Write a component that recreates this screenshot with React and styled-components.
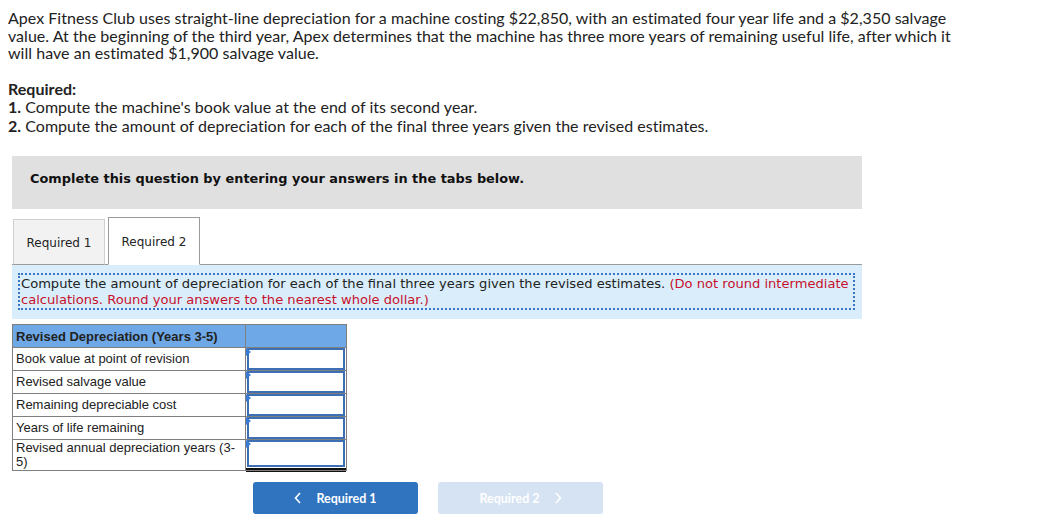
import React from "react";
import styled, { createGlobalStyle } from "styled-components";

const Global = createGlobalStyle`
  html, body { margin: 0; padding: 0; background: #fff; }
  body { font-family: Lato, "Open Sans", sans-serif; color: #222; }
`;

const Page = styled.div`
  padding: 9px 8px 8px 8px;
  width: 1040px;
  box-sizing: border-box;
`;

const Para = styled.p`
  margin: 0 0 18px 0;
  font-family: Lato, sans-serif;
  font-size: 16px;
  letter-spacing: 0.03px;
  line-height: 17.6px;
  color: #222;
  width: 950px;
`;

const ReqList = styled.div`
  font-family: Lato, sans-serif;
  font-size: 16px;
  letter-spacing: 0.03px;
  line-height: 18.5px;
  color: #222;
  margin-bottom: 21px;
`;

const Bold = styled.b`
  font-weight: 700;
`;

const Work = styled.div`
  margin-left: 4px;
  width: 850px;
`;

const Banner = styled.div`
  background: #e0e0e0;
  height: 53px;
  box-sizing: border-box;
  padding: 15px 0 0 18px;
  font-family: "DejaVu Sans", Verdana, sans-serif;
  font-weight: 700;
  font-size: 12.9px;
  line-height: 16px;
  color: #111;
`;

const Tabs = styled.div`
  display: flex;
  align-items: flex-end;
  gap: 3px;
  margin-top: 8px;
  padding-left: 1px;
  position: relative;
  z-index: 1;
  margin-bottom: -1px;
`;

const Tab = styled.div`
  width: 92px;
  height: ${(p) => (p.$active ? 48 : 46)}px;
  box-sizing: border-box;
  display: flex;
  align-items: center;
  justify-content: center;
  font-family: "DejaVu Sans", Verdana, sans-serif;
  font-size: 12px;
  color: #222;
  background: ${(p) => (p.$active ? "#fff" : "#f2f2f2")};
  border: 1px solid ${(p) => (p.$active ? "#9a9a9a" : "#cfcfcf")};
  border-bottom: ${(p) => (p.$active ? "1px solid #fff" : "1px solid #9a9a9a")};
  padding-top: 1px;
`;

const Panel = styled.div`
  background: #d9eefa;
  border-top: 1px solid #9a9a9a;
  padding: 8px 7px 9px 6px;
`;

const Dotted = styled.div`
  border: 2px dotted #3a76c8;
  padding: 1px 3px 0 1px;
  font-family: "DejaVu Sans", Verdana, sans-serif;
  font-size: 13.08px;
  line-height: 16px;
  color: #222;
`;

const Red = styled.span`
  color: #c8102e;
`;

const Table = styled.table`
  margin-top: 5px;
  border-collapse: collapse;
  font-family: "Liberation Sans", Arial, sans-serif;
  font-size: 13px;
  color: #222;
`;

const Th = styled.th`
  background: #6fa8e6;
  border: 1px solid #7f7f7f;
  height: 23px;
  padding: 0 3px;
  text-align: left;
  font-weight: 700;
  width: ${(p) => p.$w}px;
  box-sizing: border-box;
`;

const Td = styled.td`
  border: 1px solid #7f7f7f;
  height: ${(p) => (p.$tall ? 31 : 23)}px;
  padding: 0 3px;
  line-height: 14px;
  vertical-align: ${(p) => (p.$tall ? "top" : "middle")};
  padding-top: ${(p) => (p.$tall ? 1 : 0)}px;
  box-sizing: border-box;
`;

const InputTd = styled.td`
  border: 1px solid #7f7f7f;
  padding: 0;
  position: relative;
  height: ${(p) => (p.$tall ? 31 : 23)}px;
  box-sizing: border-box;
`;

const InputBox = styled.div`
  position: absolute;
  inset: 0px 1px ${(p) => (p.$double ? 3 : 0)}px 1px;
  border: 2px solid #3c6fb4;
  background: #fff;
  box-sizing: border-box;
`;

const DoubleLine = styled.div`
  position: absolute;
  left: 0;
  right: 0;
  bottom: -2px;
  height: 4px;
  border-top: 2px solid #111;
  border-bottom: 1px solid #111;
  box-sizing: border-box;
`;

const Flag = styled.div`
  position: absolute;
  left: 0;
  top: 0;
  width: 0;
  height: 0;
  border-top: 4px solid transparent;
  border-bottom: 4px solid transparent;
  border-left: 5px solid #3a7bd5;
`;

const Nav = styled.div`
  display: flex;
  gap: 20px;
  margin: 11px 0 0 241px;
`;

const NavButton = styled.div`
  width: 165px;
  height: 32px;
  border-radius: 3px;
  background: ${(p) => (p.$disabled ? "#d6e3f3" : "#3073bf")};
  color: #fff;
  display: flex;
  align-items: center;
  justify-content: center;
  gap: 14px;
  font-family: Lato, sans-serif;
  font-weight: 700;
  font-size: 12.5px;
`;

const Chevron = ({ dir }) => (
  <svg width="8" height="12" viewBox="0 0 8 12">
    <path
      d={dir === "left" ? "M6 1 L1.5 6 L6 11" : "M2 1 L6.5 6 L2 11"}
      fill="none"
      stroke="#fff"
      strokeWidth="1.6"
    />
  </svg>
);

const rows = [
  "Book value at point of revision",
  "Revised salvage value",
  "Remaining depreciable cost",
  "Years of life remaining",
];

export default function App() {
  return (
    <Page>
      <Global />
      <Para>
        Apex Fitness Club uses straight-line depreciation for a machine costing $22,850, with an
        estimated four year life and a $2,350 salvage value. At the beginning of the third year,
        Apex determines that the machine has three more years of remaining useful life, after which
        it will have an estimated $1,900 salvage value.
      </Para>
      <ReqList>
        <Bold>Required:</Bold>
        <br />
        <Bold>1.</Bold> Compute the machine's book value at the end of its second year.
        <br />
        <Bold>2.</Bold> Compute the amount of depreciation for each of the final three years given
        the revised estimates.
      </ReqList>
      <Work>
        <Banner>Complete this question by entering your answers in the tabs below.</Banner>
        <Tabs>
          <Tab>Required 1</Tab>
          <Tab $active>Required 2</Tab>
        </Tabs>
        <Panel>
          <Dotted>
            Compute the amount of depreciation for each of the final three years given the revised
            estimates.{" "}
            <Red>
              (Do not round intermediate calculations. Round your answers to the nearest whole
              dollar.)
            </Red>
          </Dotted>
        </Panel>
        <Table>
          <thead>
            <tr>
              <Th $w={233}>Revised Depreciation (Years 3-5)</Th>
              <Th $w={101}></Th>
            </tr>
          </thead>
          <tbody>
            {rows.map((r) => (
              <tr key={r}>
                <Td>{r}</Td>
                <InputTd>
                  <InputBox />
                  <Flag />
                </InputTd>
              </tr>
            ))}
            <tr>
              <Td $tall>Revised annual depreciation years (3-5)</Td>
              <InputTd $tall>
                <InputBox $double />
                <DoubleLine />
                <Flag />
              </InputTd>
            </tr>
          </tbody>
        </Table>
        <Nav>
          <NavButton>
            <Chevron dir="left" />
            Required 1
          </NavButton>
          <NavButton $disabled>
            Required 2
            <Chevron dir="right" />
          </NavButton>
        </Nav>
      </Work>
    </Page>
  );
}
